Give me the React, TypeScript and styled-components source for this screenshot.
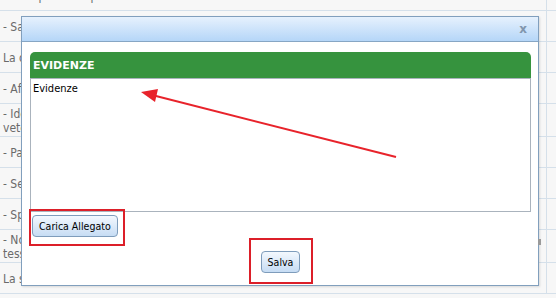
import styled, { createGlobalStyle } from 'styled-components';

const GlobalStyle = createGlobalStyle`
  html, body {
    margin: 0;
    padding: 0;
    background: #f7f7f7;
    overflow: hidden;
  }
  * {
    box-sizing: border-box;
  }
`;

const rows = [
  ['- Area per adempimenti amministrativi'],
  ['- Sanzioni'],
  ['La doc.'],
  ['- Affidi'],
  ['- Identificazione', 'veterinari'],
  ['- Pagamenti'],
  ['- Segnalazioni'],
  ['- Spese'],
  ['- Nomine', 'tessere'],
  ['La scheda'],
];

const App = () => {
  return (
    <Page>
      <GlobalStyle />
      <ListLayout>
        {rows.map((lines, i) => (
          <Row key={i}>
            <RowText>
              {lines.map((l) => (
                <span key={l}>{l}</span>
              ))}
            </RowText>
            <RowSide />
          </Row>
        ))}
      </ListLayout>

      <Dialog>
        <TitleBar>
          <CloseButton>x</CloseButton>
        </TitleBar>
        <DialogBody>
          <Panel>
            <PanelHeader>EVIDENZE</PanelHeader>
            <PanelContent>Evidenze</PanelContent>
          </Panel>
          <UploadRow>
            <Button>Carica Allegato</Button>
          </UploadRow>
          <Footer>
            <Button>Salva</Button>
          </Footer>
        </DialogBody>
        <ResizeGrip />
      </Dialog>

      <Highlight $x={29} $y={209} $w={96} $h={37} />
      <Highlight $x={249} $y={238} $w={64} $h={46} />

      <ArrowLayer width="556" height="298" viewBox="0 0 556 298">
        <line x1="396" y1="157" x2="152" y2="95" stroke="#e8232b" strokeWidth="2" />
        <polygon points="141,92 158,89 155,102" fill="#e8232b" />
      </ArrowLayer>
    </Page>
  );
};
export default App;

const Page = styled.div`
  position: relative;
  width: 556px;
  height: 298px;
  overflow: hidden;
  font-family: 'DejaVu Sans Condensed', 'DejaVu Sans', sans-serif;
`;

const ListLayout = styled.div`
  display: flex;
  flex-direction: column;
  margin-top: -20px;
`;

const Row = styled.div`
  display: grid;
  grid-template-columns: 547px 1fr;
  border-bottom: 1px solid #d5e0ea;
`;

const RowText = styled.div`
  display: flex;
  flex-direction: column;
  justify-content: center;
  min-height: 30px;
  padding: 3px 3px 1px;
  border-right: 1px solid #d5e0ea;
  font-size: 12px;
  line-height: 14px;
  color: #6a6a6a;
`;

const RowSide = styled.div``;

const Dialog = styled.div`
  position: absolute;
  left: 21px;
  top: 16px;
  width: 518px;
  height: 270px;
  display: flex;
  flex-direction: column;
  background: #ffffff;
  border: 1px solid #819fbd;
  box-shadow: 1px 1px 2px rgba(0, 0, 0, 0.12);
`;

const TitleBar = styled.div`
  display: flex;
  align-items: center;
  justify-content: flex-end;
  height: 25px;
  padding-right: 11px;
  background: linear-gradient(#e6f1fd, #b5d6f8);
  border-bottom: 1px solid #87a6c4;
`;

const CloseButton = styled.span`
  font-family: 'DejaVu Sans', sans-serif;
  font-size: 12px;
  font-weight: bold;
  color: #8196ad;
  line-height: 12px;
  margin-top: -1px;
`;

const DialogBody = styled.div`
  display: flex;
  flex-direction: column;
  padding: 10px 7px 0 8px;
`;

const Panel = styled.div`
  display: flex;
  flex-direction: column;
`;

const PanelHeader = styled.div`
  height: 26px;
  display: flex;
  align-items: center;
  padding-left: 3px;
  padding-top: 1px;
  background: #36933e;
  border-radius: 5px 5px 0 0;
  color: #ffffff;
  font-family: 'DejaVu Sans', sans-serif;
  font-size: 11px;
  font-weight: bold;
`;

const PanelContent = styled.div`
  height: 134px;
  padding: 3px 2px;
  border: 1px solid #aab3bd;
  font-size: 11px;
  line-height: 14px;
  color: #000000;
`;

const UploadRow = styled.div`
  display: flex;
  padding: 3px 0 0 2px;
`;

const Footer = styled.div`
  display: flex;
  justify-content: center;
  padding-top: 14px;
`;

const Button = styled.button`
  height: 22px;
  padding: 0 6px;
  border: 1px solid #7e9cbb;
  border-radius: 4px;
  background: linear-gradient(#f3f8fe, #c6dcf4);
  font-family: 'DejaVu Sans Condensed', 'DejaVu Sans', sans-serif;
  font-size: 10.5px;
  color: #000000;
`;

const ResizeGrip = styled.div`
  position: absolute;
  right: -3px;
  top: 222px;
  width: 3px;
  height: 6px;
  background: #9a9a9a;
`;

const Highlight = styled.div<{ $x: number; $y: number; $w: number; $h: number }>`
  position: absolute;
  left: ${(p) => p.$x}px;
  top: ${(p) => p.$y}px;
  width: ${(p) => p.$w}px;
  height: ${(p) => p.$h}px;
  border: 2px solid #dc1f29;
`;

const ArrowLayer = styled.svg`
  position: absolute;
  left: 0;
  top: 0;
  pointer-events: none;
`;
